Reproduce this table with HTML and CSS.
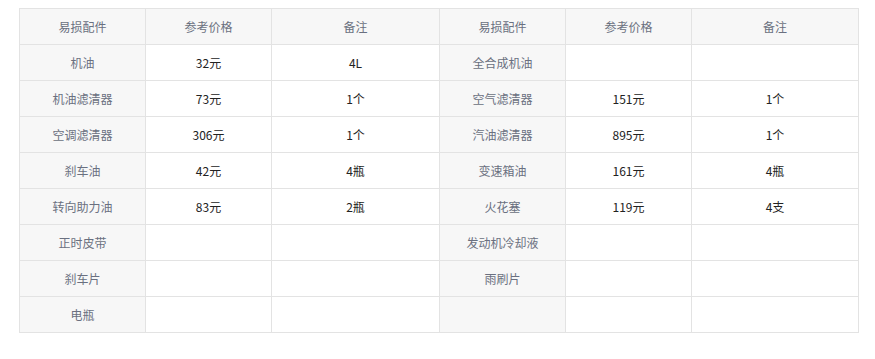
FILE: index.html
```html
<!DOCTYPE html>
<html lang="zh">
<head>
<meta charset="utf-8">
<link rel="stylesheet" href="styles.css">
</head>
<body>
<table class="parts">
  <colgroup>
    <col class="c-name"><col class="c-price"><col class="c-note">
    <col class="c-name"><col class="c-price"><col class="c-note-last">
  </colgroup>
  <thead>
    <tr><th>易损配件</th><th>参考价格</th><th>备注</th><th>易损配件</th><th>参考价格</th><th>备注</th></tr>
  </thead>
  <tbody>
    <tr><th>机油</th><td>32元</td><td>4L</td><th>全合成机油</th><td></td><td></td></tr>
    <tr><th>机油滤清器</th><td>73元</td><td>1个</td><th>空气滤清器</th><td>151元</td><td>1个</td></tr>
    <tr><th>空调滤清器</th><td>306元</td><td>1个</td><th>汽油滤清器</th><td>895元</td><td>1个</td></tr>
    <tr><th>刹车油</th><td>42元</td><td>4瓶</td><th>变速箱油</th><td>161元</td><td>4瓶</td></tr>
    <tr><th>转向助力油</th><td>83元</td><td>2瓶</td><th>火花塞</th><td>119元</td><td>4支</td></tr>
    <tr><th>正时皮带</th><td></td><td></td><th>发动机冷却液</th><td></td><td></td></tr>
    <tr><th>刹车片</th><td></td><td></td><th>雨刷片</th><td></td><td></td></tr>
    <tr><th>电瓶</th><td></td><td></td><th></th><td></td><td></td></tr>
  </tbody>
</table>
</body>
</html>
```

FILE: styles.css
```css
html, body {
  background: #fff;
}
body {
  margin: 8px 0 0 19px;
  font-family: "Noto Sans CJK SC", "Noto Sans", sans-serif;
  font-size: 12px;
}
.parts {
  border-collapse: collapse;
  table-layout: fixed;
  width: 839px;
}
.c-name, .c-price { width: 126px; }
.c-note { width: 168px; }
.c-note-last { width: 167px; }
.parts th, .parts td {
  border: 1px solid #e3e3e3;
  height: 35px;
  padding: 0;
  text-align: center;
  vertical-align: middle;
  font-weight: normal;
  line-height: 16px;
}
.parts th {
  background: #f7f7f7;
  color: #6a7080;
}
.parts td {
  background: #fff;
  color: #222;
}
```
